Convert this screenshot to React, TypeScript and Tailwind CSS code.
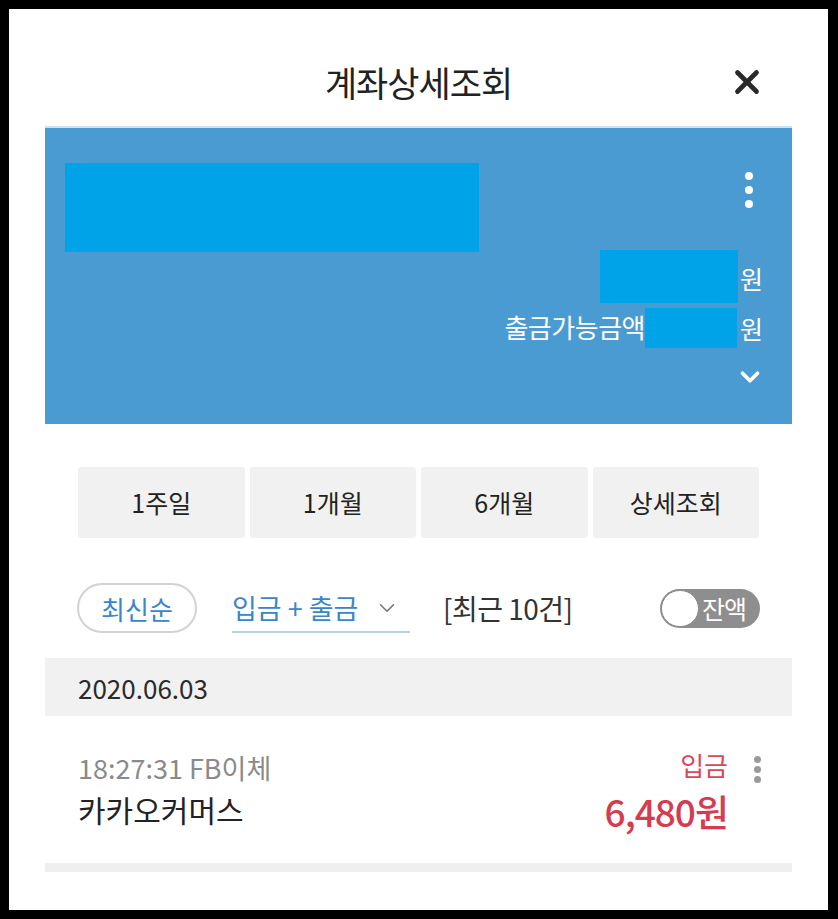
import { ChevronDown, X } from 'lucide-react'

const font = { fontFamily: '"Noto Sans CJK KR", "Noto Sans", sans-serif' }

function Dots({ color }: { color: string }) {
  return (
    <div className="flex flex-col items-center gap-[6px]">
      <span className={`w-[8px] h-[8px] rounded-full ${color}`} />
      <span className={`w-[8px] h-[8px] rounded-full ${color}`} />
      <span className={`w-[8px] h-[8px] rounded-full ${color}`} />
    </div>
  )
}

export default function App() {
  const periods = ['1주일', '1개월', '6개월', '상세조회']
  return (
    <div className="w-[838px] h-[919px] bg-black pt-[9px] pl-[9px] pr-[10px] pb-[9px]" style={font}>
      <div className="w-full h-full bg-white flex flex-col">
        {/* header */}
        <div className="relative h-[117px] flex items-center justify-center pt-[27px]">
          <h1 className="text-[35px] tracking-[-1px] text-[#222] font-normal leading-none">계좌상세조회</h1>
          <X className="absolute right-[62px] top-[54px] w-[38px] h-[38px] text-[#2a2a2a]" strokeWidth={3} />
        </div>

        {/* account panel */}
        <div className="mx-[36px] border-t-2 border-[#cfe0ee]">
          <div className="h-[296px] bg-[#4b9bd3] pl-[20px] pr-[31px] pt-[35px] flex flex-col">
            <div className="flex justify-between">
              <div className="w-[414px] h-[89px] bg-[#00a3e8]" />
              <div className="pt-[9px] pr-[8px]">
                <Dots color="bg-white" />
              </div>
            </div>
            <div className="flex justify-end items-center -mt-[2px]">
              <div className="w-[138px] h-[53px] bg-[#00a3e8]" />
              <span className="text-[25px] text-white leading-none ml-[2px] -mr-[2px] pt-[4px]">원</span>
            </div>
            <div className="flex justify-end items-center mt-[5px]">
              <span className="text-[26px] text-white leading-none tracking-[-0.5px] -mt-[2px]">출금가능금액</span>
              <div className="w-[92px] h-[40px] bg-[#00a3e8]" />
              <span className="text-[25px] text-white leading-none ml-[3px] -mr-[2px]">원</span>
            </div>
            <div className="flex justify-end mt-[14px]">
              <ChevronDown className="w-[30px] h-[30px] text-white -mr-[4px]" strokeWidth={3} />
            </div>
          </div>
        </div>

        {/* period buttons */}
        <div className="mx-[69px] mt-[43px] grid grid-cols-4 gap-[5px]">
          {periods.map((p) => (
            <button key={p} className="h-[71px] bg-[#f1f1f1] rounded-[3px] text-[25px] text-[#222]">
              {p}
            </button>
          ))}
        </div>

        {/* filters */}
        <div className="mx-[68px] mt-[45px] flex items-center">
          <div className="w-[120px] h-[50px] rounded-full border-2 border-[#d2d2d2] flex items-center justify-center text-[26px] text-[#3a86c6]">
            최신순
          </div>
          <div className="ml-[35px] w-[178px] h-[50px] border-b-2 border-[#b8cfe4] flex items-center text-[27px] text-[#3a86c6] pt-[2px]">
            <span className="whitespace-pre">입금 + 출금</span>
            <ChevronDown className="ml-[16px] w-[26px] h-[26px] text-[#777]" strokeWidth={1.5} />
          </div>
          <span className="ml-[33px] text-[28px] tracking-[-0.5px] text-[#333]">[최근 10건]</span>
          <div className="ml-auto w-[100px] h-[39px] rounded-full bg-[#8e8e8e] flex items-center pl-[1px]">
            <span className="w-[38px] h-[37px] rounded-full bg-white border border-[#888]" />
            <span className="ml-[3px] text-[25px] tracking-[-1px] text-white leading-none">잔액</span>
          </div>
        </div>

        {/* date bar */}
        <div className="mx-[36px] mt-[25px] h-[58px] bg-[#f1f1f1] flex items-center pl-[33px] text-[26px] text-[#2a2a2a]">
          2020.06.03
        </div>

        {/* transaction */}
        <div className="mx-[36px] h-[156px] flex pl-[33px] pr-[31px] pt-[34px] border-b-[9px] border-[#efefef]">
          <div className="flex flex-col">
            <span className="text-[27px] text-[#8a8a8a] leading-[36px]">18:27:31 FB이체</span>
            <span className="text-[30px] text-[#222] leading-[42px] mt-[2px]">카카오커머스</span>
          </div>
          <div className="ml-auto flex flex-col items-end">
            <span className="text-[26px] text-[#d6485a] leading-[34px] -mt-[2px]">입금</span>
            <span className="text-[37px] font-medium tracking-[-1px] text-[#d63c50] leading-[40px] mt-[9px]">6,480원</span>
          </div>
          <div className="ml-[26px] pt-[6px]">
            <div className="flex flex-col items-center gap-[3px]">
              <span className="w-[7px] h-[7px] rounded-full bg-[#9a9a9a]" />
              <span className="w-[7px] h-[7px] rounded-full bg-[#9a9a9a]" />
              <span className="w-[7px] h-[7px] rounded-full bg-[#9a9a9a]" />
            </div>
          </div>
        </div>
      </div>
    </div>
  )
}
